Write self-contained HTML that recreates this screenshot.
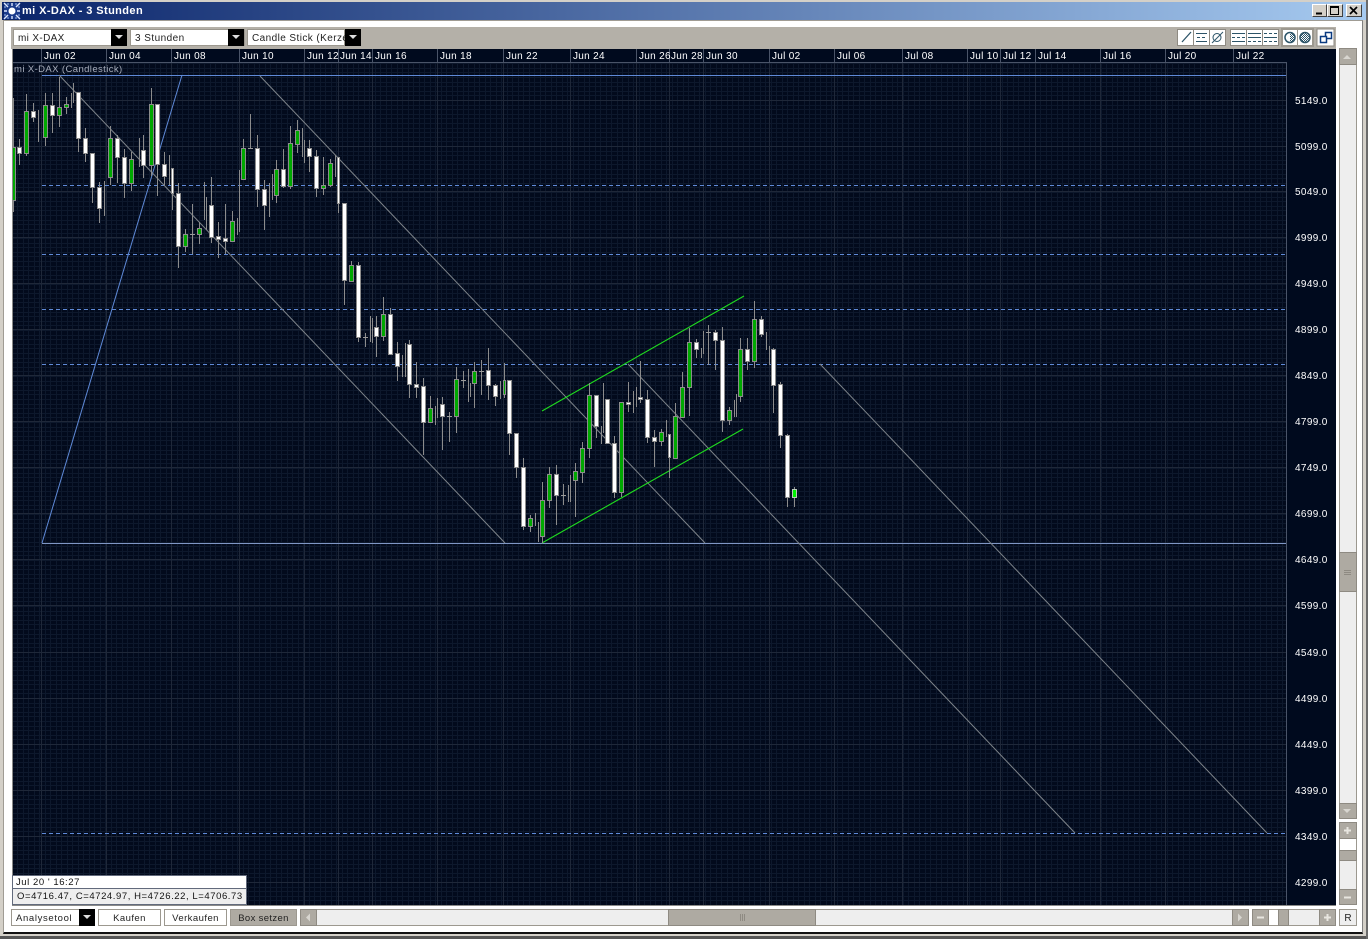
<!DOCTYPE html>
<html><head><meta charset="utf-8"><style>
html,body{margin:0;padding:0;width:1368px;height:939px;overflow:hidden;background:#fff;font-family:"Liberation Sans",sans-serif}
.a{position:absolute;box-sizing:border-box}
.t{position:absolute;white-space:nowrap;font-size:10px;letter-spacing:.35px;color:#fff;line-height:12px}
.d{top:51px;letter-spacing:.3px}.p{left:1295px}
.gb{background:#aeaaa2;border:1px solid #8e8a82}
.wb{background:#fff;border:2px solid #aeaaa2}
.bt{position:absolute;box-sizing:border-box;background:#fff;border:1px solid #9c988f;font-size:9.5px;letter-spacing:.45px;color:#222;text-align:center;line-height:17px;white-space:nowrap;overflow:hidden}
.ar{position:absolute;background:#000;box-sizing:border-box}
.ar:after{content:"";position:absolute;left:4px;top:6px;border-left:4px solid transparent;border-right:4px solid transparent;border-top:4px solid #ddd}
svg{position:absolute;left:0;top:0}
</style></head><body>
<div class="a" style="left:0;top:0;width:1368px;height:939px;background:#d4d0c8"></div>
<div class="a" style="left:2px;top:2px;width:1364px;height:18px;background:linear-gradient(90deg,#0a246a,#a6caf0)"></div>
<div class="a" style="left:3px;top:20px;width:1360px;height:914px;background:#fff;border-left:1px solid #a09c94;border-top:1px solid #a09c94;border-right:1px solid #808080;border-bottom:2px solid #111"></div>
<div class="a" style="left:0;top:936px;width:1368px;height:3px;background:#555"></div>
<div class="a" style="left:1366px;top:0;width:2px;height:939px;background:#6a6a6a"></div>
<div class="t" style="left:22px;top:5px;font-size:11px;font-weight:bold;letter-spacing:.4px">mi X-DAX - 3 Stunden</div>
<svg width="24" height="22" style="left:0;top:0"><rect x="4" y="3" width="16" height="16" fill="#1a3a8a"/><circle cx="12" cy="11" r="3.5" fill="#fff"/><path d="M4 3l4 4M20 3l-4 4M4 19l4-4M20 19l-4-4M12 3v3M12 16v3M4 11h3M17 11h3" stroke="#dfe8ff" stroke-width="1.4"/><path d="M4 7h2M18 7h2M4 15h2M18 15h2M8 3v2M16 3v2M8 17v2M16 17v2" stroke="#9fb8e8"/></svg>
<!-- window buttons -->
<div class="a" style="left:1312px;top:4px;width:15px;height:13px;background:#d4d0c8;border:1px solid;border-color:#fff #404040 #404040 #fff"></div>
<div class="a" style="left:1327px;top:4px;width:16px;height:13px;background:#d4d0c8;border:1px solid;border-color:#fff #404040 #404040 #fff"></div>
<div class="a" style="left:1346px;top:4px;width:16px;height:13px;background:#d4d0c8;border:1px solid;border-color:#fff #404040 #404040 #fff"></div>
<svg width="1368" height="30"><path d="M1316 13.500h6" stroke="#000" stroke-width="2"/><rect x="1330.500" y="6.500" width="8" height="8" fill="none" stroke="#000"/><path d="M1330 7h9" stroke="#000" stroke-width="2"/><path d="M1350 7l7 7M1357 7l-7 7" stroke="#000" stroke-width="1.700"/></svg>

<!-- toolbar panel -->
<div class="a" style="left:11px;top:27px;width:1325px;height:22px;background:#b4b0a8"></div>
<div class="a" style="left:13px;top:29px;width:114px;height:17px;background:#fff;border:1px solid #9c988f"></div>
<div class="t" style="left:18px;top:33px;color:#222;letter-spacing:.35px">mi X-DAX</div><div class="ar" style="left:111px;top:29px;width:16px;height:17px"></div>
<div class="a" style="left:130px;top:29px;width:115px;height:17px;background:#fff;border:1px solid #9c988f"></div>
<div class="t" style="left:135px;top:33px;color:#222;letter-spacing:.45px">3 Stunden</div><div class="ar" style="left:228px;top:29px;width:16px;height:17px"></div>
<div class="a" style="left:247px;top:29px;width:98px;height:17px;background:#fff;border:1px solid #9c988f;overflow:hidden"></div>
<div class="a" style="left:252px;top:33px;width:93px;height:12px;overflow:hidden"><div class="t" style="left:0;top:0;color:#222;letter-spacing:.42px">Candle Stick (Kerzen)</div></div><div class="ar" style="left:345px;top:29px;width:16px;height:17px"></div>
<!-- toolbar icons -->
<svg width="1368" height="49">
<defs><pattern id="ht" width="2" height="2" patternUnits="userSpaceOnUse"><rect width="1" height="1" fill="#2c5468"/><rect x="1" y="1" width="1" height="1" fill="#2c5468"/></pattern></defs>
<g fill="#fff" stroke="#8e8a82"><rect x="1177.500" y="29.500" width="16" height="16"/><rect x="1193.500" y="29.500" width="16" height="16"/><rect x="1209.500" y="29.500" width="16" height="16"/><rect x="1230.500" y="29.500" width="16" height="16"/><rect x="1246.500" y="29.500" width="16" height="16"/><rect x="1262.500" y="29.500" width="16" height="16"/></g>
<rect x="1281" y="28" width="33" height="19" fill="#9c988f"/><rect x="1283" y="30" width="14" height="15" fill="#fff"/><rect x="1298" y="30" width="14" height="15" fill="#fff"/>
<rect x="1317" y="29" width="17" height="17" fill="#fff" stroke="#8e8a82"/>
<g stroke="#2c5468" fill="none"><path d="M1182 42l9-10" stroke-width="1.300"/><path d="M1196 33.500h11M1196 41.500h11" /><path d="M1197 37.500h3M1202 37.500h3" /><circle cx="1217" cy="37.500" r="4"/><path d="M1212 43l11-11"/>
<path d="M1232 33.500h13M1232 37.500h3M1237 37.500h3M1242 37.500h3M1232 41.500h13"/><path d="M1248 33.500h13M1248 37.500h13M1248 41.500h3M1253 41.500h3M1258 41.500h3"/><path d="M1264 33.500h3M1269 33.500h3M1274 33.500h3M1264 37.500h13M1264 41.500h3M1269 41.500h3M1274 41.500h3"/>
<circle cx="1290" cy="37.500" r="5" stroke-width="1.500"/><circle cx="1305" cy="37.500" r="5" fill="url(#ht)" stroke-width="1.500"/></g>
<path d="M1290 33a4.500 4.500 0 0 1 0 9z" fill="url(#ht)"/>
<rect x="1325.500" y="32.500" width="6" height="6" fill="#fff" stroke="#0a3a80" stroke-width="1.500"/><rect x="1320.500" y="36.500" width="6" height="6" fill="#fff" stroke="#0a3a80" stroke-width="1.500"/>
</svg>

<!-- chart -->
<svg width="1368" height="939" shape-rendering="crispEdges" style="top:0;left:0">
<defs>
<pattern id="v" width="11" height="10" patternUnits="userSpaceOnUse" patternTransform="translate(1)"><rect x="0" y="0" width="1" height="10" fill="#0d182c"/><rect x="5" y="0" width="1" height="10" fill="#0d182c"/></pattern>
<pattern id="h" width="10" height="23" patternUnits="userSpaceOnUse" patternTransform="translate(0,100)"><rect x="0" y="0" width="10" height="1" fill="#0d182c"/><rect x="0" y="5" width="10" height="1" fill="#0d182c"/><rect x="0" y="9" width="10" height="1" fill="#0d182c"/><rect x="0" y="14" width="10" height="1" fill="#0d182c"/><rect x="0" y="18" width="10" height="1" fill="#0d182c"/></pattern>
<clipPath id="c"><rect x="13" y="63" width="1273" height="842"/></clipPath>
</defs>
<rect x="12" y="49" width="1324" height="857" fill="#000a1e"/>
<rect x="13" y="63" width="1273" height="842" fill="#020a1c"/>
<rect x="13" y="63" width="1273" height="842" fill="url(#v)"/>
<rect x="13" y="63" width="1273" height="842" fill="url(#h)"/>
<!-- major -->
<path stroke="#1f2839" d="M13 100.500H1286M13 146.500H1286M13 191.500H1286M13 237.500H1286M13 283.500H1286M13 329.500H1286M13 375.500H1286M13 421.500H1286M13 467.500H1286M13 513.500H1286M13 559.500H1286M13 605.500H1286M13 652.500H1286M13 698.500H1286M13 744.500H1286M13 790.500H1286M13 836.500H1286M13 882.500H1286M41.500 63V905M106.500 63V905M171.500 63V905M239.500 63V905M304.500 63V905M338.500 63V905M372.500 63V905M437.500 63V905M503.500 63V905M570.500 63V905M636.500 63V905M669.500 63V905M703.500 63V905M769.500 63V905M834.500 63V905M902.500 63V905M967.500 63V905M1000.500 63V905M1035.500 63V905M1100.500 63V905M1165.500 63V905M1233.500 63V905"/>
<path stroke="#4a5468" d="M41.500 49V62M106.500 49V62M171.500 49V62M239.500 49V62M304.500 49V62M338.500 49V62M372.500 49V62M437.500 49V62M503.500 49V62M570.500 49V62M636.500 49V62M669.500 49V62M703.500 49V62M769.500 49V62M834.500 49V62M902.500 49V62M967.500 49V62M1000.500 49V62M1035.500 49V62M1100.500 49V62M1165.500 49V62M1233.500 49V62M12 62.500H1286.500M1286.500 62V905"/>
<path stroke="#8a8a88" fill="none" d="M12.500 49V906M12 905.500H1336"/>
<g clip-path="url(#c)" fill="none" shape-rendering="auto">
<path stroke="#5f8ad8" stroke-width="1" stroke-dasharray="4 3" d="M42 185.500H1286M42 254.500H1286M42 309.500H1286M42 364.500H1286M42 833.500H1286"/>
<path stroke="#5f8ad8" d="M42 75.500H1286M42 543L182 75"/>
<path stroke="#7f96c4" d="M42 543.500H1286"/>
<path stroke="#7e848a" d="M59 75L505 543M260 76L705 543M628 364L1075 833M820 364L1267 833"/>
<path stroke="#1fdc1f" stroke-width="1.100" d="M542 411L744 296M542 543L743 429"/>
</g>
<g clip-path="url(#c)">
<path stroke="#8c8c8c" fill="none" d="M13.500 98V212M19.500 139V165M26.500 94V156M33.500 103V122M38.500 110V142M45.500 93V146M52.500 93V133M59.500 77V127M66.500 97V114M71.500 93V108M73.500 83V103M78.500 92V152M85.500 128V162M92.500 153V203M99.500 182V223M104.500 181V216M110.500 126V185M117.500 135V183M124.500 149V198M131.500 152V191M139.500 138V167M143.500 135V178M151.500 88V176M157.500 104V196M164.500 152V185M169.500 155V185M172.500 168V210M178.500 183V268M185.500 229V252M192.500 204V254M199.500 222V244M204.500 182V220M206.500 197V230M211.500 177V243M218.500 222V258M225.500 204V254M232.500 211V242M237.500 218V235M239.500 170V232M243.500 139V179M250.500 114V148M257.500 135V207M264.500 180V230M269.500 183V217M272.500 174V200M276.500 160V203M283.500 149V188M290.500 126V189M297.500 120V153M302.500 128V157M304.500 140V163M309.500 140V172M316.500 150V197M323.500 157V195M330.500 159V187M335.500 155V177M338.500 157V213M344.500 203V305M351.500 261V282M358.500 262V342M365.500 333V347M370.500 316V342M372.500 318V343M376.500 316V357M383.500 297V341M390.500 308V354M397.500 342V381M402.500 355V377M405.500 343V377M409.500 340V398M416.500 362V398M423.500 378V455M430.500 396V423M435.500 406V425M437.500 398V418M442.500 397V450M449.500 412V442M456.500 367V433M463.500 371V388M468.500 369V402M470.500 383V397M474.500 362V408M481.500 360V395M488.500 348V400M495.500 384V406M500.500 381V399M504.500 363V398M509.500 380V455M516.500 433V478M523.500 458V530M530.500 515V532M535.500 513V526M538.500 522V542M542.500 482V543M549.500 467V508M556.500 465V525M563.500 484V505M568.500 485V502M570.500 475V502M575.500 463V517M582.500 442V483M589.500 383V458M596.500 395V438M601.500 426V444M603.500 383V433M607.500 399V443M614.500 436V498M621.500 402V497M628.500 382V412M633.500 391V413M636.500 387V407M640.500 361V403M647.500 390V443M654.500 430V467M661.500 429V446M666.500 420V437M669.500 434V478M675.500 403V458M682.500 372V417M689.500 328V416M696.500 339V358M701.500 348V358M703.500 331V354M708.500 325V365M715.500 330V370M722.500 327V432M729.500 407V425M734.500 400V417M736.500 394V417M740.500 338V402M747.500 338V370M754.500 301V368M761.500 316V337M766.500 332V350M769.500 346V365M773.500 348V413M780.500 382V448M787.500 434V507M794.500 487V507"/>
<path stroke="#9a9a9a" d="M190 234.500h5M248 148.500h5M363 337.500h5M447 416.500h5M461 380.500h5M479 371.500h5M561 495.500h5M706 332.500h5"/>
<path fill="#00a800" stroke="#8c8c8c" d="M11.500 147.500h4v53h-4zM24.500 111.500h4v42h-4zM43.500 105.500h4v32h-4zM57.500 107.500h4v8h-4zM64.500 104.500h4v3h-4zM108.500 138.500h4v39h-4zM129.500 159.500h4v24h-4zM149.500 104.500h4v61h-4zM183.500 234.500h4v12h-4zM197.500 228.500h4v6h-4zM230.500 221.500h4v20h-4zM241.500 148.500h4v31h-4zM274.500 169.500h4v26h-4zM288.500 143.500h4v43h-4zM295.500 130.500h4v14h-4zM321.500 185.500h4v3h-4zM328.500 163.500h4v22h-4zM349.500 265.500h4v16h-4zM381.500 314.500h4v22h-4zM428.500 408.500h4v14h-4zM454.500 379.500h4v37h-4zM472.500 371.500h4v12h-4zM503.500 380.500h2v14h-2zM528.500 518.500h4v8h-4zM540.500 500.500h4v36h-4zM547.500 474.500h4v26h-4zM573.500 471.500h4v9h-4zM580.500 448.500h4v24h-4zM587.500 395.500h4v53h-4zM619.500 402.500h4v90h-4zM659.500 432.500h4v9h-4zM673.500 416.500h4v42h-4zM680.500 387.500h4v30h-4zM687.500 342.500h4v45h-4zM727.500 410.500h4v10h-4zM738.500 349.500h4v47h-4zM752.500 319.500h4v42h-4z"/>
<path fill="#fff" stroke="#8c8c8c" d="M17.500 147.500h4v6h-4zM31.500 111.500h4v6h-4zM50.500 105.500h4v10h-4zM76.500 92.500h4v46h-4zM83.500 138.500h4v15h-4zM90.500 153.500h4v34h-4zM97.500 187.500h4v21h-4zM115.500 138.500h4v19h-4zM122.500 157.500h4v26h-4zM141.500 150.500h4v15h-4zM155.500 104.500h4v60h-4zM162.500 164.500h4v12h-4zM171.500 168.500h2v25h-2zM176.500 193.500h4v53h-4zM209.500 205.500h4v32h-4zM216.500 236.500h4v3h-4zM223.500 238.500h4v3h-4zM255.500 148.500h4v41h-4zM262.500 189.500h4v16h-4zM281.500 169.500h4v17h-4zM307.500 148.500h4v8h-4zM314.500 156.500h4v32h-4zM337.500 157.500h2v46h-2zM342.500 203.500h4v77h-4zM356.500 265.500h4v72h-4zM374.500 327.500h4v9h-4zM388.500 314.500h4v40h-4zM395.500 353.500h4v13h-4zM407.500 344.500h4v40h-4zM414.500 384.500h4v3h-4zM421.500 386.500h4v36h-4zM440.500 404.500h4v12h-4zM486.500 370.500h4v15h-4zM493.500 385.500h4v11h-4zM507.500 380.500h4v53h-4zM514.500 433.500h4v34h-4zM521.500 467.500h4v59h-4zM554.500 474.500h4v21h-4zM594.500 395.500h4v31h-4zM605.500 399.500h4v44h-4zM612.500 443.500h4v49h-4zM626.500 402.500h4v2h-4zM638.500 397.500h4v2h-4zM645.500 399.500h4v38h-4zM652.500 437.500h4v4h-4zM668.500 434.500h2v23h-2zM694.500 342.500h4v7h-4zM713.500 332.500h4v8h-4zM720.500 340.500h4v80h-4zM745.500 349.500h4v12h-4zM759.500 319.500h4v15h-4zM771.500 349.500h4v36h-4zM778.500 384.500h4v51h-4zM785.500 435.500h4v62h-4z"/>
<path fill="#00f000" stroke="#b8c8b8" d="M792.500 489.500h4v8h-4z"/>
</g>
</svg>

<div class="t d" style="left:44px">Jun 02</div><div class="t d" style="left:109px">Jun 04</div><div class="t d" style="left:174px">Jun 08</div><div class="t d" style="left:242px">Jun 10</div><div class="t d" style="left:307px">Jun 12</div><div class="t d" style="left:340px">Jun 14</div><div class="t d" style="left:375px">Jun 16</div><div class="t d" style="left:440px">Jun 18</div><div class="t d" style="left:506px">Jun 22</div><div class="t d" style="left:573px">Jun 24</div><div class="t d" style="left:639px">Jun 26</div><div class="t d" style="left:671px">Jun 28</div><div class="t d" style="left:706px">Jun 30</div><div class="t d" style="left:772px">Jul 02</div><div class="t d" style="left:837px">Jul 06</div><div class="t d" style="left:905px">Jul 08</div><div class="t d" style="left:970px">Jul 10</div><div class="t d" style="left:1003px">Jul 12</div><div class="t d" style="left:1038px">Jul 14</div><div class="t d" style="left:1103px">Jul 16</div><div class="t d" style="left:1168px">Jul 20</div><div class="t d" style="left:1236px">Jul 22</div>
<div class="t" style="left:14px;top:64px;color:#a8aebc;font-size:9.5px;letter-spacing:.4px">mi X-DAX (Candlestick)</div>
<div class="t p" style="top:96px">5149.0</div><div class="t p" style="top:142px">5099.0</div><div class="t p" style="top:187px">5049.0</div><div class="t p" style="top:233px">4999.0</div><div class="t p" style="top:279px">4949.0</div><div class="t p" style="top:325px">4899.0</div><div class="t p" style="top:371px">4849.0</div><div class="t p" style="top:417px">4799.0</div><div class="t p" style="top:463px">4749.0</div><div class="t p" style="top:509px">4699.0</div><div class="t p" style="top:555px">4649.0</div><div class="t p" style="top:601px">4599.0</div><div class="t p" style="top:648px">4549.0</div><div class="t p" style="top:694px">4499.0</div><div class="t p" style="top:740px">4449.0</div><div class="t p" style="top:786px">4399.0</div><div class="t p" style="top:832px">4349.0</div><div class="t p" style="top:878px">4299.0</div>

<!-- info box -->
<div class="a" style="left:12px;top:875px;width:235px;height:30px;background:#eee;border:1px solid #626a7c"></div>
<div class="a" style="left:13px;top:876px;width:233px;height:13px;background:#fff;border-bottom:1px solid #626a7c"></div>
<div class="t" style="left:16px;top:877px;color:#111;font-size:9.5px;letter-spacing:.55px">Jul 20 ' 16:27</div>
<div class="t" style="left:17px;top:891px;color:#111;font-size:9.5px;letter-spacing:.57px">O=4716.47, C=4724.97, H=4726.22, L=4706.73</div>

<!-- right scroll -->
<div class="a" style="left:1339px;top:48px;width:18px;height:771px;background:#eee;border:1px solid #9c988f"></div>
<div class="a gb" style="left:1339px;top:48px;width:18px;height:17px"></div>
<div class="a gb" style="left:1339px;top:803px;width:18px;height:16px"></div>
<div class="a gb" style="left:1339px;top:552px;width:18px;height:40px"></div>
<div class="a" style="left:1339px;top:822px;width:18px;height:83px;background:#eee;border:1px solid #9c988f"></div>
<div class="a" style="left:1340px;top:839px;width:16px;height:11px;background:#fff"></div>
<div class="a gb" style="left:1339px;top:822px;width:18px;height:17px"></div>
<div class="a gb" style="left:1339px;top:850px;width:18px;height:11px"></div>
<div class="a gb" style="left:1339px;top:889px;width:18px;height:16px"></div>

<!-- bottom -->
<div class="a" style="left:11px;top:909px;width:84px;height:17px;background:#fff;border:1px solid #9c988f"></div>
<div class="t" style="left:16px;top:913px;color:#222;font-size:9.5px;letter-spacing:.65px">Analysetool</div>
<div class="ar" style="left:79px;top:909px;width:16px;height:17px"></div>
<div class="bt" style="left:98px;top:909px;width:63px;height:17px">Kaufen</div>
<div class="bt" style="left:164px;top:909px;width:63px;height:17px">Verkaufen</div>
<div class="bt" style="left:230px;top:909px;width:67px;height:17px;background:#aeaaa2;letter-spacing:.35px">Box setzen</div>
<div class="a" style="left:300px;top:909px;width:949px;height:17px;background:#eee;border:1px solid #9c988f"></div>
<div class="a gb" style="left:300px;top:909px;width:17px;height:17px"></div>
<div class="a gb" style="left:1232px;top:909px;width:17px;height:17px"></div>
<div class="a gb" style="left:668px;top:909px;width:148px;height:17px"></div>
<div class="a" style="left:1252px;top:909px;width:84px;height:17px;background:#eee;border:1px solid #9c988f"></div>
<div class="a" style="left:1269px;top:910px;width:9px;height:15px;background:#fff"></div>
<div class="a gb" style="left:1252px;top:909px;width:17px;height:17px"></div>
<div class="a gb" style="left:1278px;top:909px;width:11px;height:17px"></div>
<div class="a gb" style="left:1319px;top:909px;width:17px;height:17px"></div>
<div class="bt" style="left:1339px;top:909px;width:18px;height:17px;background:#eee;font-size:10px;letter-spacing:0">R</div>
<svg width="1368" height="939"><g fill="#d8d6d0"><path d="M1343 59l4-4 4 4zM1343 809l4 4 4-4zM306 917.500l4-4v8zM1238 913.500l4 4-4 4z"/></g>
<path d="M1344 570.500h7M1344 572.500h7M1344 574.500h7M740.500 914v7M742.500 914v7M744.500 914v7" stroke="#8e8a82"/>
<path d="M1344 830.500h7M1347.500 827v7M1344 897.500h7M1257 917.500h7M1324 917.500h7M1327.500 914v7" stroke="#e8e6e0" stroke-width="2"/></svg>
</body></html>
